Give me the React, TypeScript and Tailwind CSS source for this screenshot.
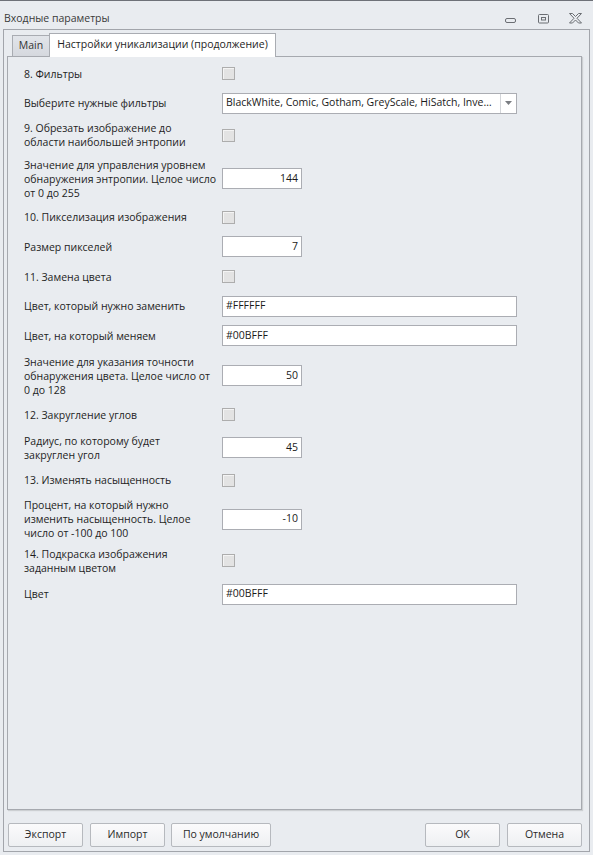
import React from "react";

const font = { fontFamily: '"Open Sans", "Noto Sans", sans-serif' };

function Checkbox() {
  return (
    <div className="w-[13px] h-[13px] border border-[#adadad] bg-[#e3e3e3] shadow-[inset_1px_1px_0_#f4f4f4]" />
  );
}

function Input({ value, wide, right }: { value: string; wide?: boolean; right?: boolean }) {
  return (
    <div
      className={`h-[21px] bg-white border border-[#abadb3] flex items-center px-[3px] text-[10.5px] text-[#1a1a1a] ${
        wide ? "w-[295px]" : "w-[80px]"
      } ${right ? "justify-end" : "justify-start"}`}
    >
      {value}
    </div>
  );
}

function Row({ h, label, children }: { h: string; label: React.ReactNode; children: React.ReactNode }) {
  return (
    <div className={`flex items-center ${h}`}>
      <div className="w-[214px] shrink-0 pl-[16px] text-[10.5px] leading-[14px] text-[#1e1e1e] whitespace-nowrap">
        {label}
      </div>
      <div className="flex items-center">{children}</div>
    </div>
  );
}

function Btn({ children, w }: { children: React.ReactNode; w: string }) {
  return (
    <div
      className={`${w} h-[24px] rounded-[2px] border border-[#b6b9be] bg-gradient-to-b from-[#fbfbfc] to-[#eef0f2] flex items-center justify-center text-[10.5px] text-[#2a2a2a]`}
    >
      {children}
    </div>
  );
}

export default function App() {
  return (
    <div className="w-[593px] h-[855px] bg-[#e9ecf0] border-t border-[#6e7178] overflow-hidden" style={font}>
      {/* Title bar */}
      <div className="h-[28px] flex items-center justify-between pl-[4px] pt-[7px]">
        <div className="text-[10.5px] text-[#3a3a3a]">Входные параметры</div>
        <div className="flex items-center">
          <svg width="12" height="6" viewBox="0 0 12 6" className="mr-[21px] mt-[4px]">
            <rect x="0.5" y="0.5" width="10" height="4" rx="1.5" fill="none" stroke="#6b6e73" />
          </svg>
          <svg width="11" height="10" viewBox="0 0 11 10" className="mr-[20px]">
            <rect x="0.5" y="0.5" width="10" height="8.5" rx="1" fill="none" stroke="#6b6e73" />
            <rect x="3.5" y="3.5" width="4" height="2.5" fill="none" stroke="#6b6e73" />
          </svg>
          <svg width="13" height="11" viewBox="0 0 13 11" className="mr-[11px]">
            <polygon
              points="0.5,0.5 3.5,0.5 6.5,3.5 9.5,0.5 12.5,0.5 8,5.25 12.5,10 9.5,10 6.5,7 3.5,10 0.5,10 5,5.25"
              fill="none"
              stroke="#6b6e73"
              strokeWidth="1"
              strokeLinejoin="round"
            />
          </svg>
        </div>
      </div>

      {/* Frame */}
      <div className="ml-[3px] w-[587px] h-[823px] border border-[#a2a5ab] flex flex-col">
        {/* Tabs */}
        <div className="h-[27px] flex items-end pl-[8px] -mb-px relative z-10">
          <div className="w-[37px] h-[21px] border-l border-t border-[#a9acb2] bg-gradient-to-b from-[#e2e5ea] to-[#d5d8de] flex items-center justify-center text-[10.5px] text-[#333] mb-px">
            Main
          </div>
          <div className="w-[227px] h-[24px] border-l border-t border-r border-[#a9acb2] bg-white flex items-center justify-center text-[10.5px] text-[#1e1e1e] pb-[1px]">
            Настройки уникализации (продолжение)
          </div>
        </div>

        {/* Panel */}
        <div className="ml-[3px] w-[575px] h-[754px] border border-[#a6a9af] bg-[#e9ecf0] shadow-[1px_1px_1px_rgba(0,0,0,0.12)] pt-[3px]">
          <Row h="h-[27px]" label="8. Фильтры">
            <Checkbox />
          </Row>
          <Row h="h-[32px]" label="Выберите нужные фильтры">
            <div className="w-[295px] h-[21px] bg-white border border-[#abadb3] flex items-center">
              <div className="flex-1 min-w-0 px-[3px] text-[10.5px] text-[#1a1a1a] whitespace-nowrap">
                BlackWhite, Comic, Gotham, GreyScale, HiSatch, Inve…
              </div>
              <div className="w-[16px] h-full border-l border-[#d3d5d9] flex items-center justify-center">
                <svg width="7" height="4" viewBox="0 0 7 4">
                  <polygon points="0,0 7,0 3.5,4" fill="#7a7d82" />
                </svg>
              </div>
            </div>
          </Row>
          <Row
            h="h-[32px]"
            label={
              <>
                9. Обрезать изображение до
                <br />
                области наибольшей энтропии
              </>
            }
          >
            <Checkbox />
          </Row>
          <Row
            h="h-[55px]"
            label={
              <>
                Значение для управления уровнем
                <br />
                обнаружения энтропии. Целое число
                <br />
                от 0 до 255
              </>
            }
          >
            <Input value="144" right />
          </Row>
          <Row h="h-[22px]" label="10. Пикселизация изображения">
            <Checkbox />
          </Row>
          <Row h="h-[37px]" label="Размер пикселей">
            <Input value="7" right />
          </Row>
          <Row h="h-[23px]" label="11. Замена цвета">
            <Checkbox />
          </Row>
          <Row h="h-[36px]" label="Цвет, который нужно заменить">
            <Input value="#FFFFFF" wide />
          </Row>
          <Row h="h-[23px]" label="Цвет, на который меняем">
            <Input value="#00BFFF" wide />
          </Row>
          <Row
            h="h-[57px]"
            label={
              <>
                Значение для указания точности
                <br />
                обнаружения цвета. Целое число от
                <br />0 до 128
              </>
            }
          >
            <Input value="50" right />
          </Row>
          <Row h="h-[21px]" label="12. Закругление углов">
            <Checkbox />
          </Row>
          <Row
            h="h-[45px]"
            label={
              <>
                Радиус, по которому будет
                <br />
                закруглен угол
              </>
            }
          >
            <Input value="45" right />
          </Row>
          <Row h="h-[20px]" label="13. Изменять насыщенность">
            <Checkbox />
          </Row>
          <Row
            h="h-[58px]"
            label={
              <>
                Процент, на который нужно
                <br />
                изменить насыщенность. Целое
                <br />
                число от -100 до 100
              </>
            }
          >
            <Input value="-10" right />
          </Row>
          <Row
            h="h-[25px]"
            label={
              <>
                14. Подкраска изображения
                <br />
                заданным цветом
              </>
            }
          >
            <Checkbox />
          </Row>
          <Row h="h-[42px]" label="Цвет">
            <Input value="#00BFFF" wide />
          </Row>
        </div>

        {/* Buttons */}
        <div className="mt-[13px] flex items-center pl-[4px] pr-[7px]">
          <Btn w="w-[75px]">Экспорт</Btn>
          <div className="w-[7px]" />
          <Btn w="w-[75px]">Импорт</Btn>
          <div className="w-[6px]" />
          <Btn w="w-[100px]">По умолчанию</Btn>
          <div className="flex-1" />
          <Btn w="w-[75px]">OK</Btn>
          <div className="w-[7px]" />
          <Btn w="w-[75px]">Отмена</Btn>
        </div>
      </div>
    </div>
  );
}
